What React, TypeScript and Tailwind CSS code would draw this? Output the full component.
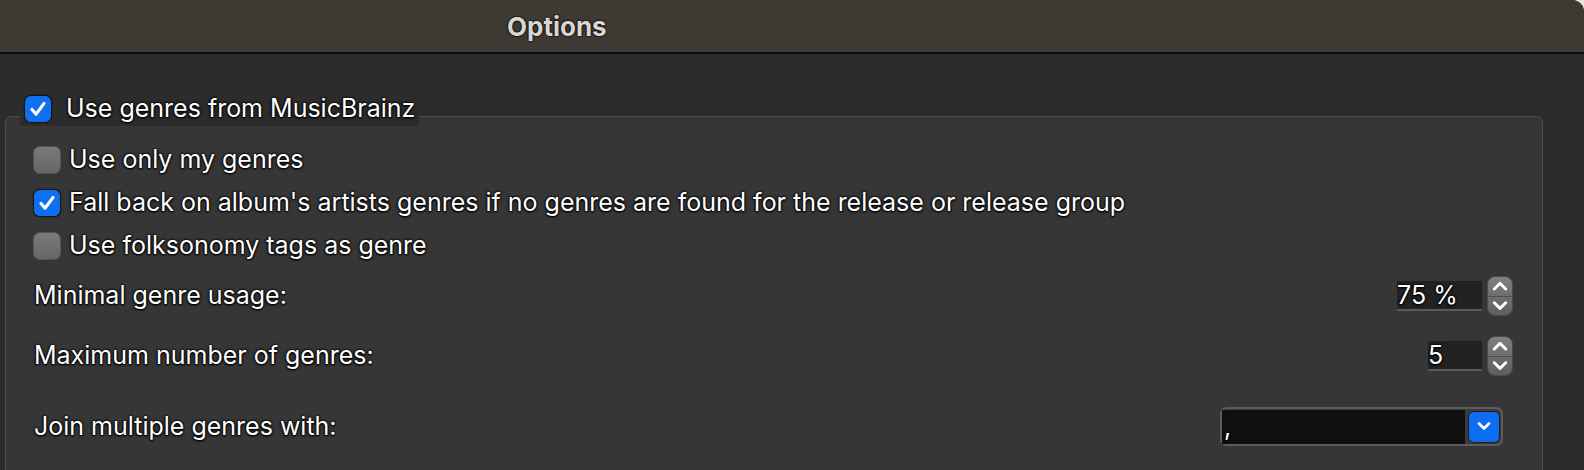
import {useState} from "react";

// Genre options panel (Picard style, macOS dark)

const halo = "[text-shadow:0_0_1px_#000,0_0_2px_#000,0_0_3px_#000,0_1px_2px_#000]";

const CheckMark = () => (
  <svg viewBox="0 0 28 28" className="w-full h-full">
    <path
      d="M7.5 14.5 L12 19.5 L20.5 8"
      fill="none"
      stroke="white"
      strokeWidth="3.4"
      strokeLinecap="round"
      strokeLinejoin="round"
    />
  </svg>
);

const Box = ({checked, onClick}: {checked: boolean; onClick: () => void}) => (
  <button
    onClick={onClick}
    className={
      checked
        ? "w-[28px] h-[28px] shrink-0 rounded-[7px] bg-[#0f6ff3] border border-[#1b1208] shadow-[0_0_1px_#000]"
        : "w-[28px] h-[28px] shrink-0 rounded-[7px] bg-gradient-to-b from-[#7a7a7a] to-[#666666] border border-[#555]"
    }
  >
    {checked && <CheckMark />}
  </button>
);

const Chevron = ({up, size = 16}: {up?: boolean; size?: number}) => (
  <svg width={size} height={size * 0.6} viewBox="0 0 14 8.4">
    <path
      d={up ? "M2 7 L7 2 L12 7" : "M2 1.5 L7 6.5 L12 1.5"}
      fill="none"
      stroke="white"
      strokeWidth="2.6"
      strokeLinecap="round"
      strokeLinejoin="round"
    />
  </svg>
);

const Stepper = () => (
  <div className="w-[26px] h-[40px] ml-[5px] rounded-[8px] bg-gradient-to-b from-[#808080] to-[#5e5e5e] border border-[#4a4a4a] flex flex-col">
    <div className="flex-1 flex items-center justify-center border-b border-[#4e4e4e]">
      <Chevron up />
    </div>
    <div className="flex-1 flex items-center justify-center">
      <Chevron />
    </div>
  </div>
);

const SpinBox = ({value, width}: {value: string; width: string}) => (
  <div className="flex items-center">
    <div
      className={`${width} h-[30px] bg-[#222] border-b-2 border-[#5a5a5a] flex items-center text-white text-[25px] leading-none ${halo}`}
    >
      {value}
    </div>
    <Stepper />
  </div>
);

const CheckRow = ({
  label,
  checked,
  onClick,
}: {
  label: string;
  checked: boolean;
  onClick: () => void;
}) => (
  <div className="h-[43px] flex items-center gap-[8px]">
    <Box checked={checked} onClick={onClick} />
    <span className={`text-[25px] text-white ${halo}`}>{label}</span>
  </div>
);

export default function App() {
  const [useGenres, setUseGenres] = useState(true);
  const [onlyMine, setOnlyMine] = useState(false);
  const [fallBack, setFallBack] = useState(true);
  const [folksonomy, setFolksonomy] = useState(false);

  return (
    <div className="bg-[#dfe8d0] w-[1584px] h-[470px]">
      <div
        className="w-[1584px] h-[470px] overflow-hidden bg-[#2c2c2c] rounded-tr-[12px]"
        style={{fontFamily: "Inter, 'Liberation Sans', sans-serif"}}
      >
        {/* Title bar */}
        <div className="h-[54px] bg-[#3d3a33] border-b-2 border-[#0d0d0d] flex items-center pl-[507px] pt-[1px]">
          <span className="text-[26px] font-bold text-[#d9d7d2] [text-shadow:0_0_2px_#000,0_0_2px_#000]">
            Options
          </span>
        </div>

        {/* Group box */}
        <div className="relative pt-[62px] pl-[5px]">
          <div className="absolute left-[20px] top-[38px] h-[34px] pr-[4px] bg-[#2c2c2c] flex items-center gap-[14px] pl-[4px]">
            <Box checked={useGenres} onClick={() => setUseGenres(!useGenres)} />
            <span className={`text-[25px] text-white ${halo}`}>
              Use genres from MusicBrainz
            </span>
          </div>

          <div className="w-[1538px] h-[400px] bg-[#363636] border border-[#4c4c4c] rounded-[6px] pt-[21px] pl-[27px] pr-[29px]">
            <CheckRow
              label="Use only my genres"
              checked={onlyMine}
              onClick={() => setOnlyMine(!onlyMine)}
            />
            <CheckRow
              label="Fall back on album's artists genres if no genres are found for the release or release group"
              checked={fallBack}
              onClick={() => setFallBack(!fallBack)}
            />
            <CheckRow
              label="Use folksonomy tags as genre"
              checked={folksonomy}
              onClick={() => setFolksonomy(!folksonomy)}
            />

            <div className="mt-[9px] h-[40px] flex items-center justify-between pl-[1px]">
              <span className={`text-[25px] text-white ${halo}`}>
                Minimal genre usage:
              </span>
              <SpinBox value="75 %" width="w-[85px]" />
            </div>

            <div className="mt-[20px] h-[40px] flex items-center justify-between pl-[1px]">
              <span className={`text-[25px] text-white ${halo}`}>
                Maximum number of genres:
              </span>
              <SpinBox value="5" width="w-[54px]" />
            </div>

            <div className="mt-[31px] h-[39px] flex items-center justify-between pl-[1px]">
              <span className={`text-[25px] text-white ${halo}`}>
                Join multiple genres with:
              </span>
              <div className="mr-[10px] w-[283px] h-[39px] rounded-[7px] border-2 border-[#5c5c5c] bg-[#3a3a3a] flex items-center">
                <div className={`flex-1 h-[34px] bg-[#0f0f0f] text-white text-[25px] leading-[34px] pl-[2px] ${halo}`}>
                  ,
                </div>
                <div className="w-[32px] h-[32px] ml-[3px] mr-[1px] rounded-[6px] bg-[#0c6cf2] border border-[#2a1d0c] flex items-center justify-center">
                  <Chevron size={14} />
                </div>
              </div>
            </div>
          </div>
        </div>
      </div>
    </div>
  );
}
